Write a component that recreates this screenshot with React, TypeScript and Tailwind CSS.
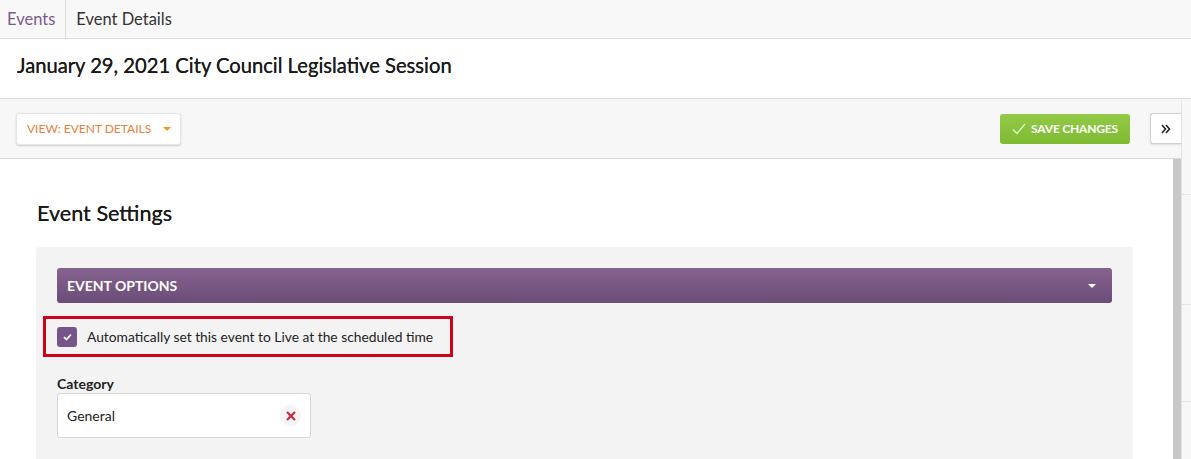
import React from "react";

export default function App() {
  return (
    <div className="w-[1191px] h-[459px] overflow-hidden bg-white text-[#222]" style={{ fontFamily: "Lato, 'Open Sans', sans-serif" }}>
      {/* Top nav */}
      <div className="h-[39px] bg-[#f8f8f8] border-b border-[#dedede] flex items-center text-[16.5px]">
        <div className="h-full flex items-center pl-[7px] pr-[10px] border-r border-[#dedede] text-[#7b5b8e]">Events</div>
        <div className="pl-[10px] text-[#333]">Event Details</div>
      </div>
      {/* Title */}
      <div className="h-[60px] border-b border-[#dcdcdc] flex items-center pl-[17px] pb-[6px]">
        <h1 className="text-[20.2px] text-[#1a1a1a] [text-shadow:0_0_0.3px_#222]">January 29, 2021 City Council Legislative Session</h1>
      </div>
      <div className="flex h-[360px]">
        <div className="flex-1 flex flex-col min-w-0">
          {/* Toolbar */}
          <div className="h-[60px] bg-[#f7f7f7] border-b border-[#d9d9d9] flex items-center pl-[16px] shrink-0">
            <button className="h-[32px] w-[165px] bg-white rounded-[3px] border border-[#e6e6e6] shadow-[0_1px_2px_rgba(0,0,0,0.18)] flex items-center pl-[10px] text-[12px] text-[#e8803a]">
              <span>VIEW: EVENT DETAILS</span>
              <span className="ml-[12px] w-0 h-0 border-l-[4px] border-r-[4px] border-t-[4px] border-l-transparent border-r-transparent border-t-[#f39c12]" />
            </button>
            <div className="flex-1" />
            <button className="h-[30px] w-[130px] rounded-[3px] bg-gradient-to-b from-[#93ca47] to-[#7ebb31] flex items-center justify-center gap-[5px] text-white text-[12px] font-bold tracking-[-0.2px] mr-[20px] ml-[1px]">
              <svg width="14" height="12" viewBox="0 0 14 12" fill="none"><path d="M1 6.5 L5 10.5 L13 1" stroke="#e8f5d5" strokeWidth="1.2" /></svg>
              <span>SAVE CHANGES</span>
            </button>
            <div className="h-[31px] w-[31px] bg-white border border-r-0 border-[#cfcfcf] rounded-l-[3px] flex items-center justify-center shadow-[0_1px_2px_rgba(0,0,0,0.1)]">
              <svg width="10" height="10" viewBox="0 0 10 10" fill="none">
                <path d="M1 1 L4.5 5 L1 9 M5 1 L8.5 5 L5 9" stroke="#222" strokeWidth="1.6" />
              </svg>
            </div>
          </div>
          {/* Content */}
          <div className="flex-1 flex min-h-0">
            <div className="flex-1 bg-white pt-[40px] pl-[36px] pr-[40px] overflow-hidden">
              <h2 className="text-[21.6px] text-[#1a1a1a] pl-[1px] leading-[29px] [text-shadow:0_0_0.3px_#222]">Event Settings</h2>
              <div className="mt-[19px] bg-[#f3f3f3] rounded-t-[4px] pt-[21px] px-[21px] h-[300px]">
                <div className="h-[35px] rounded-[3px] bg-gradient-to-b from-[#86628f] to-[#6b4d78] flex items-center pl-[10px] pr-[16px] text-white text-[14px] font-bold">
                  <span className="flex-1">EVENT OPTIONS</span>
                  <span className="w-0 h-0 border-l-[4px] border-r-[4px] border-t-[4px] border-l-transparent border-r-transparent border-t-white" />
                </div>
                <div className="mt-[13px] ml-[-14px] w-[410px] h-[41px] border-[3px] border-[#d0021b] flex items-center pl-[11px]">
                  <span className="w-[20px] h-[20px] rounded-[3px] bg-[#76568a] flex items-center justify-center">
                    <svg width="9" height="8" viewBox="0 0 9 8"><path d="M1 4.2 L3.4 6.5 L8 1.5" stroke="white" strokeWidth="1.8" fill="none" /></svg>
                  </span>
                  <span className="ml-[10px] mt-[2px] text-[13.8px] text-[#222]">Automatically set this event to Live at the scheduled time</span>
                </div>
                <div className="mt-[17px] text-[14px] font-bold text-[#222] leading-[19px]">Category</div>
                <div className="w-[254px] h-[45px] bg-white border border-[#d8d8d8] rounded-[3px] flex items-center pl-[9px] pr-[9px]">
                  <span className="flex-1 text-[14px] text-[#222]">General</span>
                  <span className="w-[21px] h-[21px] rounded-full bg-[#f4f4f4] flex items-center justify-center">
                    <svg width="12" height="12" viewBox="0 0 12 12"><path d="M2 2 L10 10 M10 2 L2 10" stroke="#cc2233" strokeWidth="2" /></svg>
                  </span>
                </div>
              </div>
            </div>
            <div className="w-[8px] bg-[#c8c8c8]" />
          </div>
        </div>
        {/* right strip */}
        <div className="w-[10px] bg-[#f7f7f7] border-l border-[#e4e4e4] flex flex-col">
          <div className="h-[96px] border-b border-[#e4e4e4]" />
          <div className="h-[110px] border-b border-[#e4e4e4]" />
          <div className="h-[97px] border-b border-[#e4e4e4]" />
        </div>
      </div>
    </div>
  );
}
